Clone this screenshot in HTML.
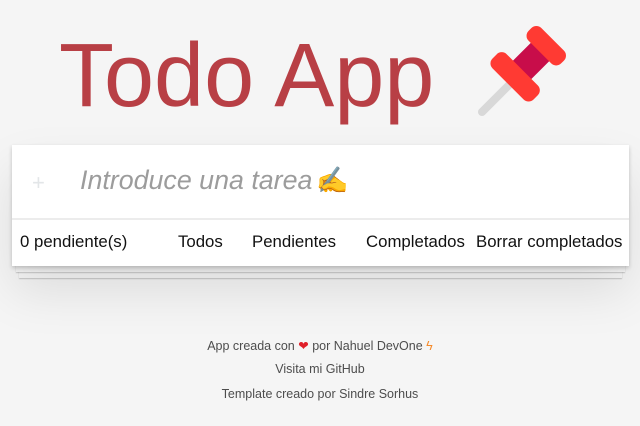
<!DOCTYPE html>
<html><head><meta charset="utf-8"><style>
body{margin:0;width:640px;height:426px;background:#f5f5f5;font-family:"Liberation Sans",sans-serif;position:relative;overflow:hidden}
.t{position:absolute;left:59px;top:24px;font-size:90px;color:#b83f45;line-height:104px;margin:0;font-weight:400}
.card{position:absolute;left:12px;top:145px;width:617px;height:121px;background:#fff;box-shadow:0 2px 4px rgba(0,0,0,.2),0 25px 50px rgba(0,0,0,.1);z-index:3}
.l1{position:absolute;left:16px;top:262px;width:609px;height:10px;background:#f6f6f6;box-shadow:0 1px 1px rgba(0,0,0,.2);z-index:2}
.l2{position:absolute;left:19px;top:268px;width:603px;height:10px;background:#f6f6f6;box-shadow:0 1px 1px rgba(0,0,0,.2);z-index:1}
.plus{position:absolute;left:32px;top:170px;font-size:22px;color:#e3e6e8}
.ph{position:absolute;left:80px;top:165px;font-size:26.8px;font-style:italic;color:#9c9c9c}
.div{position:absolute;left:0;top:73px;width:617px;height:2px;background:#ececec}
.f{position:absolute;top:232px;font-size:16.8px;color:#111;z-index:4}
.s{position:absolute;left:0;width:640px;text-align:center;font-size:12.5px;color:#4d4d4d}
</style></head><body>
<h1 class="t">Todo App</h1>
<svg style="position:absolute;left:470px;top:24px" width="100" height="98" viewBox="0 0 100 98">
<line x1="12" y1="88" x2="42" y2="58" stroke="#d8d8d8" stroke-width="8" stroke-linecap="round"/>
<g transform="rotate(45 60 38)">
<rect x="47" y="20" width="26" height="34" fill="#c80d4a"/>
<rect x="31" y="49" width="58" height="20" rx="7" fill="#ff3a33"/>
<rect x="37" y="6" width="46" height="18" rx="7" fill="#ff3a33"/>
</g></svg>
<div class="card"><div class="div"></div></div>
<div class="l1"></div><div class="l2"></div>
<div class="plus" style="z-index:4">+</div>
<div class="ph" style="z-index:4">Introduce una tarea<span style="font-style:normal;font-size:26px;color:#f0c060;margin-left:4px">✍</span></div>
<div class="f" style="left:20px">0 pendiente(s)</div>
<div class="f" style="left:178px">Todos</div>
<div class="f" style="left:252px">Pendientes</div>
<div class="f" style="left:366px">Completados</div>
<div class="f" style="left:476px">Borrar completados</div>
<div class="s" style="top:338px">App creada con <span style="color:#e0202a">❤</span> por Nahuel DevOne <span style="color:#f58a2a">ϟ</span></div>
<div class="s" style="top:362px">Visita mi GitHub</div>
<div class="s" style="top:387px">Template creado por Sindre Sorhus</div>
</body></html>
